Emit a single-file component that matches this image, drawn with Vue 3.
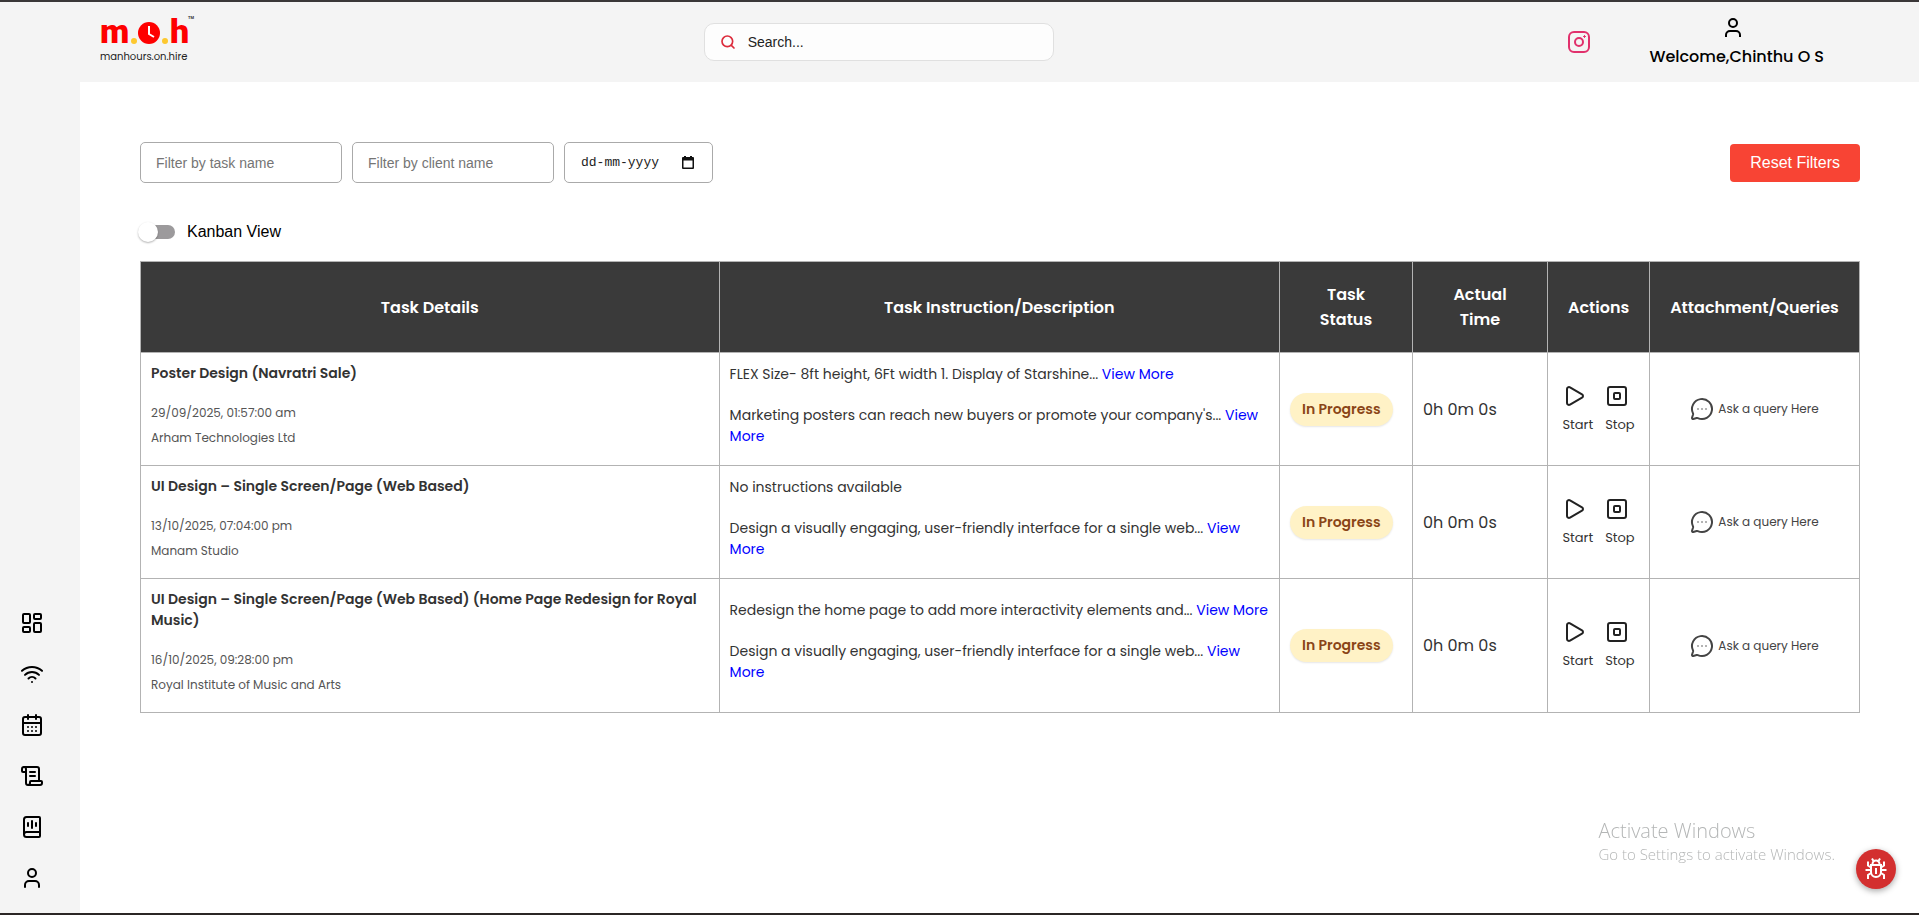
<script setup>
import { ref } from 'vue'

const navItems = [
  {
    label: 'Dashboard',
    paths: [
      'M4 3h5a1 1 0 0 1 1 1v7a1 1 0 0 1-1 1H4a1 1 0 0 1-1-1V4a1 1 0 0 1 1-1z',
      'M15 3h5a1 1 0 0 1 1 1v3a1 1 0 0 1-1 1h-5a1 1 0 0 1-1-1V4a1 1 0 0 1 1-1z',
      'M15 12h5a1 1 0 0 1 1 1v7a1 1 0 0 1-1 1h-5a1 1 0 0 1-1-1v-7a1 1 0 0 1 1-1z',
      'M4 16h5a1 1 0 0 1 1 1v3a1 1 0 0 1-1 1H4a1 1 0 0 1-1-1v-3a1 1 0 0 1 1-1z'
    ]
  },
  {
    label: 'Live',
    paths: ['M12 20h.01', 'M2 8.82a15 15 0 0 1 20 0', 'M5 12.859a10 10 0 0 1 14 0', 'M8.5 16.429a5 5 0 0 1 7 0']
  },
  {
    label: 'Calendar',
    paths: [
      'M8 2v4', 'M16 2v4', 'M5 4h14a2 2 0 0 1 2 2v14a2 2 0 0 1-2 2H5a2 2 0 0 1-2-2V6a2 2 0 0 1 2-2z', 'M3 10h18',
      'M8 14h.01', 'M12 14h.01', 'M16 14h.01', 'M8 18h.01', 'M12 18h.01', 'M16 18h.01'
    ]
  },
  {
    label: 'Tasks',
    paths: [
      'M15 12h-5', 'M15 8h-5', 'M19 17V5a2 2 0 0 0-2-2H4',
      'M8 21h12a2 2 0 0 0 2-2v-1a1 1 0 0 0-1-1H11a1 1 0 0 0-1 1v1a2 2 0 1 1-4 0V5a2 2 0 1 0-4 0v2a1 1 0 0 0 1 1h3'
    ]
  },
  {
    label: 'Reports',
    paths: [
      'M12 6v7', 'M16 8v3', 'M8 8v3',
      'M4 19.5v-15A2.5 2.5 0 0 1 6.5 2H19a1 1 0 0 1 1 1v18a1 1 0 0 1-1 1H6.5a1 1 0 0 1 0-5H20'
    ]
  },
  {
    label: 'Profile',
    paths: ['M19 21v-2a4 4 0 0 0-4-4H9a4 4 0 0 0-4 4v2', 'M12 3a4 4 0 1 0 0 8 4 4 0 0 0 0-8z']
  }
]

const tasks = [
  {
    title: 'Poster Design (Navratri Sale)',
    date: '29/09/2025, 01:57:00 am',
    client: 'Arham Technologies Ltd',
    instruction: 'FLEX Size- 8ft height, 6Ft width 1. Display of Starshine...',
    more: true,
    description: "Marketing posters can reach new buyers or promote your company's..."
  },
  {
    title: 'UI Design – Single Screen/Page (Web Based)',
    date: '13/10/2025, 07:04:00 pm',
    client: 'Manam Studio',
    instruction: 'No instructions available',
    more: false,
    description: 'Design a visually engaging, user-friendly interface for a single web...'
  },
  {
    title: 'UI Design – Single Screen/Page (Web Based) (Home Page Redesign for Royal Music)',
    date: '16/10/2025, 09:28:00 pm',
    client: 'Royal Institute of Music and Arts',
    instruction: 'Redesign the home page to add more interactivity elements and...',
    more: true,
    description: 'Design a visually engaging, user-friendly interface for a single web...'
  }
]

const taskName = ref('')
const clientName = ref('')
const date = ref('')
const kanban = ref(false)

function resetFilters() {
  taskName.value = ''
  clientName.value = ''
  date.value = ''
}
</script>

<template>
  <div class="app">
    <header class="topbar">
      <a href="#" class="logo" aria-label="manhours.on.hire">
        <svg width="96" height="34" viewBox="0 0 96 34">
          <text x="0" y="31" class="letter">m</text>
          <circle cx="34" cy="29" r="3" fill="#fdc82f" />
          <circle cx="49" cy="21" r="11" fill="#fe0000" />
          <path d="M49 14v8l5 3" fill="none" stroke="#fff" stroke-width="2" />
          <circle cx="65" cy="29" r="3" fill="#fdc82f" />
          <text x="70" y="31" class="letter">h</text>
          <text x="88" y="7" class="tm">TM</text>
        </svg>
        <span class="tagline">manhours.on.hire</span>
      </a>

      <label class="search">
        <svg width="16" height="16" viewBox="0 0 24 24" fill="none" stroke="#dc2c3c" stroke-width="2.5">
          <circle cx="11" cy="11" r="8" /><path d="m17 17 4 4" stroke-linecap="round" />
        </svg>
        <input type="text" placeholder="Search..." aria-label="Search" />
      </label>

      <div class="account">
        <a href="#" class="instagram" aria-label="Instagram">
          <svg class="icon" width="24" height="24" viewBox="0 0 24 24">
            <rect x="2" y="2" width="20" height="20" rx="5" />
            <circle cx="12" cy="12" r="4" />
            <path d="M17.5 5.5v2M16.5 6.5h2" stroke-width="1" />
          </svg>
        </a>
        <div class="user">
          <svg class="icon butt" width="24" height="24" viewBox="0 0 24 24">
            <path d="M19 21v-2a4 4 0 0 0-4-4H9a4 4 0 0 0-4 4v2" /><circle cx="12" cy="7" r="4" />
          </svg>
          <span>Welcome,Chinthu O S</span>
        </div>
      </div>
    </header>

    <div class="body">
      <nav class="sidebar">
        <a v-for="item in navItems" :key="item.label" href="#" :aria-label="item.label">
          <svg class="icon" width="24" height="24" viewBox="0 0 24 24">
            <path v-for="d in item.paths" :key="d" :d="d" />
          </svg>
        </a>
      </nav>

      <main class="content">
        <div class="filters">
          <input v-model="taskName" class="field" type="text" placeholder="Filter by task name" aria-label="Filter by task name" />
          <input v-model="clientName" class="field" type="text" placeholder="Filter by client name" aria-label="Filter by client name" />
          <label class="field date">
            <input v-model="date" type="text" placeholder="dd-mm-yyyy" aria-label="Date" />
            <svg width="14" height="14" viewBox="0 0 14 14">
              <path d="M3 0h2v1h4V0h2v1h1a1 1 0 0 1 1 1v10a1 1 0 0 1-1 1H2a1 1 0 0 1-1-1V2a1 1 0 0 1 1-1h1zM2.500 4.500v7h9v-7z" fill="#111" fill-rule="evenodd" />
            </svg>
          </label>
          <button type="button" class="reset" @click="resetFilters">Reset Filters</button>
        </div>

        <label class="toggle">
          <input v-model="kanban" type="checkbox" />
          <span>Kanban View</span>
        </label>

        <table class="tasks">
          <colgroup>
            <col class="c-details" /><col /><col class="c-status" /><col class="c-time" /><col class="c-actions" /><col class="c-queries" />
          </colgroup>
          <thead>
            <tr>
              <th>Task Details</th>
              <th>Task Instruction/Description</th>
              <th>Task Status</th>
              <th>Actual Time</th>
              <th>Actions</th>
              <th>Attachment/Queries</th>
            </tr>
          </thead>
          <tbody>
            <tr v-for="task in tasks" :key="task.date">
              <td class="details">
                <h3>{{ task.title }}</h3>
                <p>{{ task.date }}</p>
                <p>{{ task.client }}</p>
              </td>
              <td class="description">
                <p>{{ task.instruction }} <a v-if="task.more" href="#">View More</a></p>
                <p>{{ task.description }} <a href="#"><span>View</span> <span>More</span></a></p>
              </td>
              <td><span class="badge">In Progress</span></td>
              <td class="time">0h 0m 0s</td>
              <td>
                <div class="actions">
                  <button type="button">
                    <svg class="icon" width="24" height="24" viewBox="0 0 24 24">
                      <path d="M5 5a2 2 0 0 1 3.008-1.728l11.997 6.998a2 2 0 0 1 .003 3.458l-12 7A2 2 0 0 1 5 19z" />
                    </svg>
                    <span>Start</span>
                  </button>
                  <button type="button">
                    <svg class="icon" width="24" height="24" viewBox="0 0 24 24">
                      <rect x="3" y="3" width="18" height="18" rx="2" /><rect x="9" y="9" width="6" height="6" rx="1" />
                    </svg>
                    <span>Stop</span>
                  </button>
                </div>
              </td>
              <td>
                <button type="button" class="query">
                  <svg class="icon" width="24" height="24" viewBox="0 0 24 24">
                    <path d="M2.992 16.342a2 2 0 0 1 .094 1.167l-1.065 3.29a1 1 0 0 0 1.236 1.168l3.413-.998a2 2 0 0 1 1.099.092 10 10 0 1 0-4.777-4.719" />
                    <path d="M8 12h.01M12 12h.01M16 12h.01" />
                  </svg>
                  <span>Ask a query Here</span>
                </button>
              </td>
            </tr>
          </tbody>
        </table>
      </main>
    </div>

    <div class="watermark">
      <p class="big">Activate Windows</p>
      <p>Go to Settings to activate Windows.</p>
    </div>

    <button type="button" class="bug" aria-label="Report a bug">
      <svg width="24" height="24" viewBox="0 0 24 24" fill="none" stroke="#fff" stroke-width="2">
        <path d="M8.500 7a3.500 3.500 0 0 1 7 0" />
        <path d="M7 8h10v7a5 5 0 0 1-10 0z" />
        <path d="M12 11v6M9.500 4 8 1.500M14.500 4 16 1.500" />
        <path d="M7 10.500 4 8.500V4.500M17 10.500l3-2V4.500M7 13H1.500M17 13h5.500M7 16l-3 2v4M17 16l3 2v4" />
      </svg>
    </button>
  </div>
</template>

<style>
body {
  margin: 0;
  background: #fff;
}
</style>

<style scoped>
* {
  box-sizing: border-box;
}

.app {
  display: flex;
  flex-direction: column;
  min-height: 100vh;
  border-top: 2px solid #3a3738;
  border-bottom: 2px solid #2b2625;
  font-family: Poppins, Inter, "Open Sans", sans-serif;
  color: #333;
}

h3,
p {
  margin: 0;
}

button {
  border: 0;
  padding: 0;
  background: none;
  color: inherit;
  font-family: inherit;
  cursor: pointer;
}

svg {
  display: block;
  flex: none;
}

.icon {
  fill: none;
  stroke: currentColor;
  stroke-width: 2;
  stroke-linecap: round;
  stroke-linejoin: round;
}

.butt {
  stroke-linecap: butt;
}

.topbar {
  display: flex;
  align-items: center;
  justify-content: space-between;
  height: 80px;
  padding: 0 95px 0 100px;
  background: #f4f4f4;
}

.logo {
  display: flex;
  flex-direction: column;
  width: 90px;
  padding-bottom: 4px;
  color: #222;
  text-decoration: none;
}

.logo svg {
  overflow: visible;
}

.letter {
  fill: #fe0000;
  font: 900 34px Roboto, sans-serif;
}

.tm {
  fill: #333;
  font: 700 4px Roboto, sans-serif;
}

.tagline {
  font-size: 10px;
  line-height: 22px;
}

.search {
  display: flex;
  align-items: center;
  gap: 12px;
  width: 350px;
  height: 38px;
  padding: 0 15px;
  border: 1px solid #e0e0e0;
  border-radius: 10px;
  background: #fdfdfd;
}

.search input {
  flex: 1;
  min-width: 0;
  padding: 0;
  border: 0;
  outline: 0;
  background: none;
  font: 14px "Liberation Sans", Arial, sans-serif;
}

.search input::placeholder {
  color: #222;
}

.account {
  display: flex;
  align-items: center;
  gap: 50px;
}

.instagram {
  color: #e1306c;
}

.user {
  display: flex;
  flex-direction: column;
  align-items: center;
  gap: 1px;
  padding-top: 4px;
  color: #000;
  font-size: 16px;
  font-weight: 500;
  line-height: 32px;
}

.user span {
  padding-left: 8px;
}

.body {
  display: flex;
  flex: 1;
}

.sidebar {
  display: flex;
  flex: none;
  flex-direction: column;
  justify-content: flex-end;
  gap: 27px;
  width: 80px;
  padding: 0 0 23px 20px;
  background: #f4f4f4;
}

.sidebar a {
  width: 24px;
  color: #000;
}

.content {
  flex: 1;
  min-width: 0;
  padding: 60px 59px 60px 60px;
}

.filters {
  display: flex;
  align-items: center;
  gap: 10px;
}

.field {
  width: 202px;
  height: 41px;
  padding: 0 15px;
  border: 1px solid #aaa;
  border-radius: 5px;
  background: #fff;
  font: 14px "Liberation Sans", Arial, sans-serif;
}

.field::placeholder {
  color: #757575;
}

.date {
  display: flex;
  align-items: center;
  justify-content: space-between;
  width: 149px;
  padding: 0 17px 0 16px;
}

.date input {
  width: 90px;
  padding: 0;
  border: 0;
  outline: 0;
  font: 13px "Liberation Mono", monospace;
}

.date input::placeholder {
  color: #222;
}

.reset {
  height: 38px;
  margin-left: auto;
  padding: 0 20px;
  border-radius: 4px;
  background: #f84434;
  color: #fff;
  font: 16px "Liberation Sans", Arial, sans-serif;
}

.toggle {
  display: flex;
  align-items: center;
  gap: 12px;
  height: 38px;
  margin: 30px 0 10px;
  color: #000;
  font: 16px "Liberation Sans", Arial, sans-serif;
}

.toggle input {
  position: relative;
  width: 34px;
  height: 14px;
  margin: 0 0 0 1px;
  border-radius: 7px;
  appearance: none;
  background: #9c9a9c;
}

.toggle input::before {
  content: "";
  position: absolute;
  top: -3px;
  left: -3px;
  width: 20px;
  height: 20px;
  border-radius: 50%;
  background: #fff;
  box-shadow: 0 1px 2px rgba(0, 0, 0, 0.3);
}

.toggle input:checked::before {
  left: 17px;
}

.tasks {
  width: 100%;
  border-collapse: collapse;
  table-layout: fixed;
}

.c-details {
  width: 33.66%;
}

.c-status {
  width: 133px;
}

.c-time {
  width: 135px;
}

.c-actions {
  width: 102px;
}

.c-queries {
  width: 210px;
}

th,
td {
  border: 1px solid #b3b3b3;
}

th {
  padding: 20px;
  background: #3a3a3a;
  color: #fff;
  font-size: 16px;
  font-weight: 600;
  line-height: 25px;
}

td {
  padding: 10px;
  vertical-align: middle;
}

td.details {
  padding-bottom: 15px;
}

.details h3 {
  margin-bottom: 16px;
  font-size: 14px;
  font-weight: 600;
  line-height: 21px;
}

.details p {
  color: #555;
  font-size: 12px;
  line-height: 25px;
}

td.description {
  padding-bottom: 18px;
  font-size: 14px;
  line-height: 21px;
}

.description p + p {
  margin-top: 20px;
}

.description a {
  color: #00f;
  text-decoration: none;
}

.badge {
  display: inline-block;
  padding: 0 12px;
  border-radius: 17px;
  background: #fff2c6;
  box-shadow: 0 1px 2px rgba(0, 0, 0, 0.1);
  color: #8a4516;
  font-size: 14px;
  font-weight: 600;
  line-height: 33px;
  white-space: nowrap;
}

.time {
  font-size: 16px;
}

.actions {
  display: flex;
  justify-content: center;
  gap: 12px;
}

.actions button {
  display: flex;
  flex-direction: column;
  gap: 7px;
  color: #333;
  font-size: 13px;
  line-height: 20px;
}

.actions .icon {
  color: #222;
}

.query {
  display: flex;
  align-items: center;
  gap: 4px;
  margin: 0 auto;
  color: #444;
  font-size: 12px;
}

.query .icon path:last-child {
  stroke-width: 1.5;
}

.watermark {
  position: fixed;
  right: 84px;
  bottom: 51px;
  color: #b4b6b6;
  font-family: "Segoe UI", "Open Sans", sans-serif;
  font-size: 15px;
  font-weight: 300;
  line-height: 20px;
  pointer-events: none;
}

.watermark .big {
  font-size: 20px;
  line-height: 26px;
}

.bug {
  position: fixed;
  right: 23px;
  bottom: 26px;
  display: grid;
  place-items: center;
  width: 40px;
  height: 40px;
  border-radius: 50%;
  background: #d32f2f;
  box-shadow: 0 2px 6px rgba(0, 0, 0, 0.35);
}
</style>
